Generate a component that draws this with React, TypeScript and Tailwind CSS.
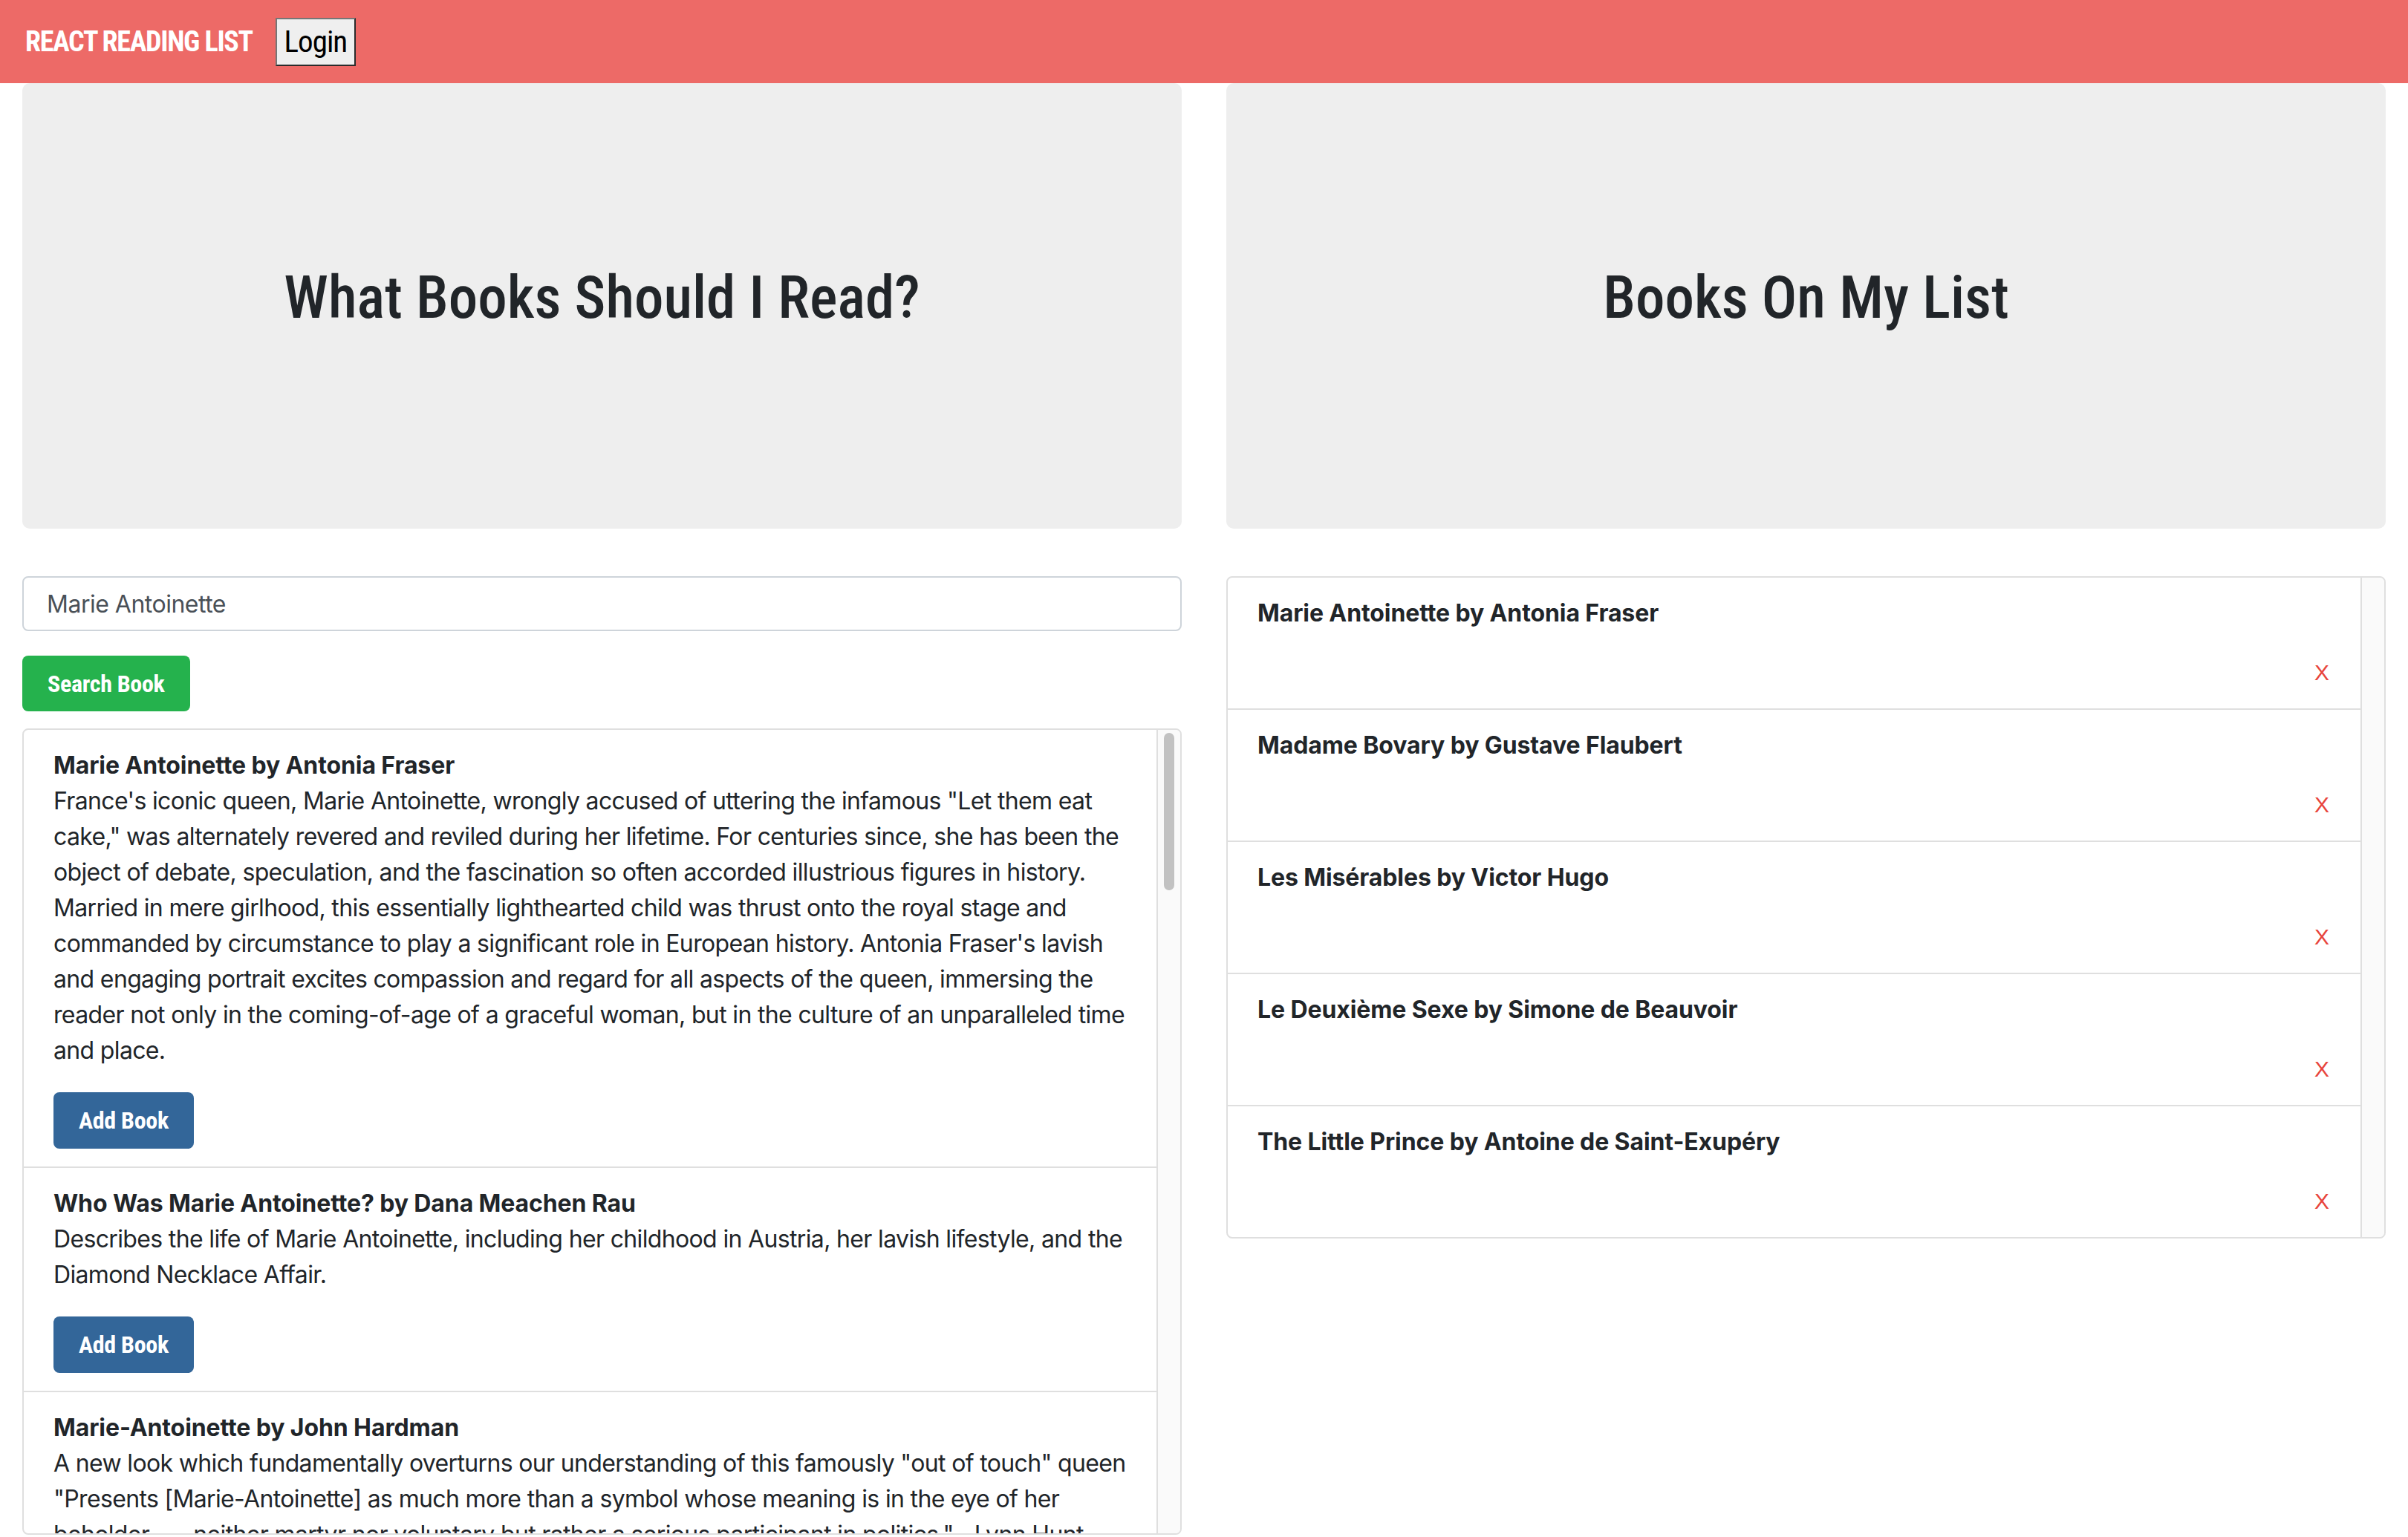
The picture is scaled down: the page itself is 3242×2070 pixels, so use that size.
import React from "react";

const NARROW = "font-['Roboto_Condensed','Open_Sans',sans-serif]";

const results = [
  {
    title: "Marie Antoinette by Antonia Fraser",
    desc: 'France\'s iconic queen, Marie Antoinette, wrongly accused of uttering the infamous "Let them eat cake," was alternately revered and reviled during her lifetime. For centuries since, she has been the object of debate, speculation, and the fascination so often accorded illustrious figures in history. Married in mere girlhood, this essentially lighthearted child was thrust onto the royal stage and commanded by circumstance to play a significant role in European history. Antonia Fraser\'s lavish and engaging portrait excites compassion and regard for all aspects of the queen, immersing the reader not only in the coming-of-age of a graceful woman, but in the culture of an unparalleled time and place.',
  },
  {
    title: "Who Was Marie Antoinette? by Dana Meachen Rau",
    desc: "Describes the life of Marie Antoinette, including her childhood in Austria, her lavish lifestyle, and the Diamond Necklace Affair.",
  },
  {
    title: "Marie-Antoinette by John Hardman",
    desc: 'A new look which fundamentally overturns our understanding of this famously "out of touch" queen "Presents [Marie-Antoinette] as much more than a symbol whose meaning is in the eye of her beholder . . . neither martyr nor voluntary but rather a serious participant in politics."--Lynn Hunt, author of The Family Romance of the French Revolution. "Hardman has made a genuine contribution to our understanding of the queen and of the court politics that shaped the final years of the old regime, drawing on an impressive range of archival sources, many of them hitherto unexploited by historians of the period."',
  },
  {
    title: "Marie Antoinette by Stefan Zweig",
    desc: "Stefan Zweig's classic biography of the doomed queen of France traces her life from her arrival at Versailles as a fourteen-year-old Austrian archduchess to her final hours in the Conciergerie. Drawing on letters, memoirs and the confidential reports of the Austrian ambassador, Zweig paints a psychologically penetrating portrait of an ordinary woman caught up in extraordinary events, whose frivolity, loyalty and courage were all put to the test by the Revolution.",
  },
  {
    title: "Marie Antoinette: The Last Queen of France by Evelyne Lever",
    desc: "Drawing on a wealth of documents, including the secret correspondence between the queen and her mother, Empress Maria Theresa, and the letters exchanged with Count Axel von Fersen, Evelyne Lever offers a vivid and balanced account of the life of Marie Antoinette.",
  },
];

const myList = [
  "Marie Antoinette by Antonia Fraser",
  "Madame Bovary by Gustave Flaubert",
  "Les Misérables by Victor Hugo",
  "Le Deuxième Sexe by Simone de Beauvoir",
  "The Little Prince by Antoine de Saint-Exupéry",
];

function Jumbotron({ title }: { title: string }) {
  return (
    <div className="h-[600px] bg-[#eeeeee] rounded-[10px] flex items-center justify-center pb-[22px]">
      <h1 className={`${NARROW} text-[79px] leading-[1.2] font-medium text-[#212529]`}>{title}</h1>
    </div>
  );
}

function Track({ thumb }: { thumb?: boolean }) {
  return (
    <div className="w-[30px] shrink-0 bg-[#fafafa] flex flex-col items-center">
      {thumb && <div className="mt-[4px] w-[14px] h-[212px] rounded-full bg-[#c2c2c2]" />}
    </div>
  );
}

export default function App() {
  return (
    <div className="min-h-[2070px] bg-white font-['Inter','Liberation_Sans',sans-serif] text-[#212529] text-[32px] leading-[48px]">
      <nav className="h-[112px] bg-[#ed6a67] flex items-center pl-[34px]">
        <span className={`${NARROW} text-white font-bold text-[38px] leading-none tracking-[-1.3px] uppercase mr-[31px]`}>
          React Reading List
        </span>
        <button
          className={`${NARROW} h-[65px] w-[108px] bg-[#efefef] text-black text-[41px] leading-none tracking-[-1px] border-2 border-solid border-t-[#767676] border-l-[#767676] border-b-[#2b2b2b] border-r-[#2b2b2b]`}
        >
          Login
        </button>
      </nav>

      <main className="px-[30px] grid grid-cols-2 gap-x-[60px]">
        <section className="flex flex-col">
          <Jumbotron title="What Books Should I Read?" />
          <input
            defaultValue="Marie Antoinette"
            className="mt-[64px] h-[74px] w-full border-2 border-[#ced4da] rounded-[8px] px-[31px] text-[32px] tracking-[-0.5px] text-[#495057] outline-none font-['Inter','Liberation_Sans',sans-serif]"
          />
          <div className="mt-[33px]">
            <button
              className={`${NARROW} h-[75px] px-[34px] bg-[#25b24d] text-white font-bold text-[32px] leading-[48px] tracking-[-0.3px] rounded-[8px]`}
            >
              Search Book
            </button>
          </div>
          <div className="mt-[23px] h-[1086px] border-2 border-[#dfdfdf] rounded-[8px] overflow-hidden flex">
            <div className="flex-1 min-w-0 overflow-hidden">
              {results.map((b, i) => (
                <div
                  key={i}
                  className={`px-[40px] pt-[24px] pb-[24px] border-r-2 border-[#dfdfdf] ${i < results.length - 1 ? "border-b-2" : ""}`}
                >
                  <p className="font-bold tracking-[-0.1px]">{b.title}</p>
                  <p className="mb-[32px] tracking-[-0.65px]">{b.desc}</p>
                  <button
                    className={`${NARROW} h-[76px] px-[34px] bg-[#336699] text-white font-bold text-[32px] leading-[48px] tracking-[-0.3px] rounded-[8px]`}
                  >
                    Add Book
                  </button>
                </div>
              ))}
            </div>
            <Track thumb />
          </div>
        </section>

        <section className="flex flex-col">
          <Jumbotron title="Books On My List" />
          <div className="mt-[64px] border-2 border-[#dfdfdf] rounded-[8px] overflow-hidden flex">
            <div className="flex-1 min-w-0">
              {myList.map((t, i) => (
                <div
                  key={i}
                  className={`px-[40px] pt-[24px] pb-[24px] border-r-2 border-[#dfdfdf] ${i < myList.length - 1 ? "border-b-2" : ""}`}
                >
                  <p className="font-bold tracking-[-0.1px] mb-[32px]">{t}</p>
                  <div className="h-[48px] flex items-center justify-end">
                    <span className="font-['Liberation_Sans',sans-serif] text-[30px] leading-none text-[#e8453c] mr-[2px]">X</span>
                  </div>
                </div>
              ))}
            </div>
            <Track />
          </div>
        </section>
      </main>
    </div>
  );
}
